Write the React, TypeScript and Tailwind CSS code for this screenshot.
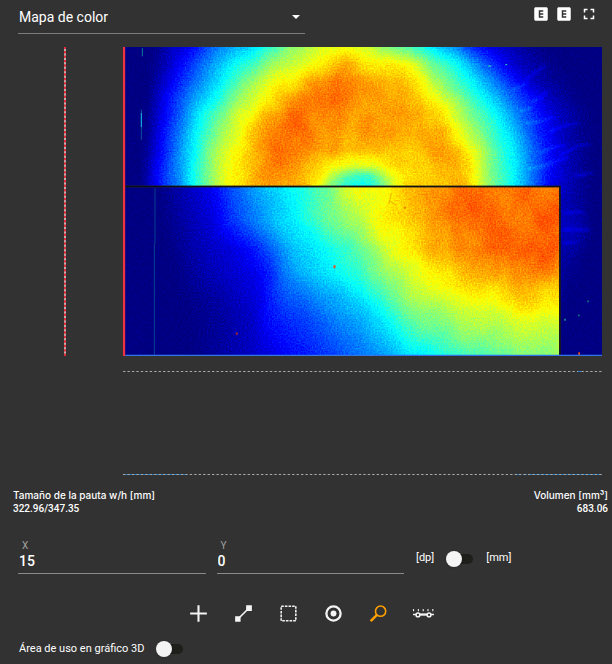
import { useState } from "react";
import { MdExplicit, MdFullscreen } from "react-icons/md";

type Stop = [number, number];
type Row = { y: number; stops: Stop[] };

// depth samples (x, level) per scan line, level 0..1
const UPPER: Row[] = [
  { y: 22, stops: [[95, 0], [160, 0.07], [220, 0.13], [290, 0.25], [350, 0.31], [430, 0.39], [500, 0.49], [560, 0.56], [650, 0.63], [760, 0.57], [840, 0.49], [930, 0.38], [1000, 0.28], [1060, 0.16], [1140, 0.08], [1220, 0.03], [1290, 0]] },
  { y: 70, stops: [[90, 0], [140, 0.06], [200, 0.15], [270, 0.27], [330, 0.35], [400, 0.45], [460, 0.53], [530, 0.59], [600, 0.64], [675, 0.72], [720, 0.65], [800, 0.65], [860, 0.61], [930, 0.5], [1000, 0.39], [1070, 0.26], [1130, 0.15], [1190, 0.07], [1260, 0.03], [1330, 0]] },
  { y: 120, stops: [[85, 0], [130, 0.07], [170, 0.14], [250, 0.27], [310, 0.38], [370, 0.48], [430, 0.57], [500, 0.63], [560, 0.7], [660, 0.76], [710, 0.71], [820, 0.71], [860, 0.67], [920, 0.6], [970, 0.51], [1040, 0.4], [1110, 0.27], [1170, 0.16], [1230, 0.07], [1290, 0.03], [1370, 0]] },
  { y: 170, stops: [[80, 0], [115, 0.07], [150, 0.14], [220, 0.27], [280, 0.38], [340, 0.5], [440, 0.63], [500, 0.7], [570, 0.74], [660, 0.76], [720, 0.72], [780, 0.74], [880, 0.69], [940, 0.62], [1010, 0.52], [1080, 0.39], [1150, 0.27], [1220, 0.16], [1280, 0.07], [1350, 0.02], [1400, 0]] },
  { y: 220, stops: [[78, 0], [110, 0.07], [145, 0.14], [200, 0.26], [250, 0.39], [310, 0.51], [400, 0.63], [440, 0.7], [510, 0.76], [570, 0.74], [650, 0.75], [720, 0.72], [830, 0.73], [910, 0.7], [980, 0.62], [1050, 0.51], [1110, 0.4], [1180, 0.28], [1240, 0.17], [1300, 0.08], [1370, 0.03], [1420, 0]] },
  { y: 270, stops: [[75, 0], [105, 0.07], [135, 0.14], [190, 0.27], [240, 0.39], [290, 0.5], [360, 0.62], [430, 0.7], [500, 0.76], [600, 0.74], [700, 0.71], [800, 0.72], [960, 0.7], [1020, 0.63], [1080, 0.52], [1130, 0.41], [1200, 0.28], [1260, 0.15], [1320, 0.07], [1380, 0.02], [1430, 0]] },
  { y: 330, stops: [[70, 0], [100, 0.07], [130, 0.14], [180, 0.27], [225, 0.39], [280, 0.51], [335, 0.62], [400, 0.7], [490, 0.77], [570, 0.73], [640, 0.71], [720, 0.69], [860, 0.68], [980, 0.72], [1030, 0.67], [1060, 0.62], [1110, 0.5], [1180, 0.36], [1230, 0.25], [1280, 0.14], [1340, 0.06], [1420, 0]] },
  { y: 375, stops: [[70, 0], [95, 0.08], [130, 0.16], [180, 0.28], [225, 0.39], [275, 0.51], [335, 0.62], [400, 0.7], [480, 0.75], [560, 0.71], [630, 0.66], [670, 0.62], [710, 0.59], [760, 0.61], [810, 0.66], [880, 0.68], [980, 0.71], [1040, 0.67], [1070, 0.61], [1110, 0.5], [1180, 0.37], [1230, 0.25], [1290, 0.13], [1340, 0.06], [1420, 0]] },
  { y: 408, stops: [[68, 0], [95, 0.09], [130, 0.17], [180, 0.27], [225, 0.39], [275, 0.51], [340, 0.63], [400, 0.7], [480, 0.74], [560, 0.7], [610, 0.64], [650, 0.54], [685, 0.44], [720, 0.41], [755, 0.44], [790, 0.56], [830, 0.63], [890, 0.67], [980, 0.71], [1040, 0.68], [1070, 0.62], [1110, 0.51], [1180, 0.37], [1240, 0.23], [1290, 0.12], [1350, 0.06], [1420, 0]] },
  { y: 440, stops: [[68, 0], [95, 0.09], [130, 0.17], [180, 0.26], [225, 0.39], [275, 0.51], [340, 0.64], [400, 0.7], [480, 0.71], [560, 0.69], [605, 0.6], [650, 0.46], [690, 0.38], [740, 0.37], [780, 0.46], [820, 0.59], [870, 0.67], [980, 0.7], [1040, 0.68], [1070, 0.62], [1110, 0.51], [1180, 0.37], [1240, 0.23], [1300, 0.1], [1350, 0.05], [1420, 0]] },
  { y: 500, stops: [[1300, 0], [1330, 0.06], [1380, 0.03], [1420, 0]] },
  { y: 560, stops: [[1300, 0], [1330, 0.07], [1380, 0.05], [1420, 0]] },
  { y: 650, stops: [[1300, 0], [1330, 0.04], [1370, 0.02], [1400, 0]] },
  { y: 760, stops: [[1300, 0], [1330, 0.02], [1350, 0]] },
  { y: 820, stops: [[1300, 0], [1330, 0]] },
  { y: 948, stops: [[1300, 0], [1330, 0]] },
];

const LOWER: Row[] = [
  { y: 442, stops: [[110, 0], [200, 0.06], [280, 0.12], [340, 0.21], [400, 0.28], [450, 0.33], [560, 0.41], [620, 0.49], [660, 0.56], [740, 0.62], [830, 0.66], [880, 0.69], [960, 0.74], [1020, 0.765], [1318, 0.76]] },
  { y: 540, stops: [[120, 0], [210, 0.05], [280, 0.09], [340, 0.18], [400, 0.25], [450, 0.3], [520, 0.37], [600, 0.44], [650, 0.49], [700, 0.55], [780, 0.62], [840, 0.65], [900, 0.69], [960, 0.74], [1060, 0.77], [1180, 0.765], [1300, 0.78]] },
  { y: 625, stops: [[140, 0], [230, 0.05], [330, 0.09], [400, 0.14], [460, 0.23], [510, 0.3], [600, 0.37], [680, 0.44], [750, 0.52], [800, 0.58], [850, 0.62], [900, 0.67], [950, 0.72], [1050, 0.76], [1180, 0.765], [1240, 0.8], [1318, 0.765]] },
  { y: 700, stops: [[160, 0], [260, 0.05], [400, 0.1], [450, 0.16], [490, 0.24], [560, 0.31], [660, 0.38], [740, 0.44], [790, 0.51], [850, 0.58], [920, 0.62], [980, 0.64], [1060, 0.69], [1180, 0.74], [1240, 0.75], [1318, 0.72]] },
  { y: 770, stops: [[170, 0], [300, 0.04], [420, 0.1], [450, 0.15], [500, 0.21], [600, 0.27], [700, 0.33], [770, 0.41], [820, 0.48], [900, 0.56], [970, 0.59], [1050, 0.62], [1160, 0.66], [1240, 0.68], [1318, 0.66]] },
  { y: 840, stops: [[190, 0], [300, 0.03], [400, 0.07], [440, 0.13], [520, 0.17], [600, 0.21], [700, 0.28], [790, 0.36], [850, 0.43], [910, 0.49], [1000, 0.54], [1100, 0.58], [1240, 0.59], [1318, 0.6]] },
  { y: 948, stops: [[210, 0], [350, 0.05], [440, 0.09], [480, 0.12], [560, 0.15], [640, 0.19], [720, 0.24], [800, 0.28], [860, 0.34], [950, 0.4], [1040, 0.43], [1140, 0.47], [1220, 0.5], [1318, 0.52]] },
];

const STRIP = 6;

function levelAt(stops: Stop[], x: number) {
  if (x <= stops[0][0]) return stops[0][1];
  for (let i = 1; i < stops.length; i++) {
    const [x0, v0] = stops[i - 1];
    const [x1, v1] = stops[i];
    if (x <= x1) return v0 + ((v1 - v0) * (x - x0)) / (x1 - x0);
  }
  return stops[stops.length - 1][1];
}

function buildStrips(rows: Row[], left: number, right: number) {
  const strips: { y: number; colors: string[] }[] = [];
  const last = rows[rows.length - 1].y;
  for (let y = rows[0].y; y < last; y += STRIP) {
    let i = 0;
    while (i < rows.length - 2 && rows[i + 1].y <= y) i++;
    const t = (y - rows[i].y) / (rows[i + 1].y - rows[i].y);
    const colors: string[] = [];
    for (let n = 0; n <= 60; n++) {
      const x = left + ((right - left) * n) / 60;
      const v = levelAt(rows[i].stops, x) * (1 - t) + levelAt(rows[i + 1].stops, x) * t;
      const g = Math.round(v * 255);
      colors.push(`rgb(${g},${g},${g})`);
    }
    strips.push({ y, colors });
  }
  return strips;
}

const upperStrips = buildStrips(UPPER, 10, 1446);
const lowerStrips = buildStrips(LOWER, 10, 1318);

function Strips({ id, strips, width }: { id: string; strips: typeof upperStrips; width: number }) {
  return (
    <g shapeRendering="crispEdges">
      {strips.map((s, i) => (
        <g key={s.y}>
          <linearGradient id={`${id}${i}`}>
            {s.colors.map((c, n) => (
              <stop key={n} offset={n / 60} stopColor={c} />
            ))}
          </linearGradient>
          <rect x={10} y={s.y} width={width} height={STRIP + 2} fill={`url(#${id}${i})`} />
        </g>
      ))}
    </g>
  );
}

function HeatMap() {
  return (
    <svg viewBox="10 22 1436 926" preserveAspectRatio="none" className="block aspect-[479/309] w-full" role="img" aria-label="Mapa de color">
      <defs>
        <filter id="jet" x="0" y="0" width="100%" height="100%" colorInterpolationFilters="sRGB">
          <feTurbulence type="fractalNoise" baseFrequency="0.21" numOctaves={1} seed={4} result="n" />
          <feColorMatrix in="n" values="1 0 0 0 0  1 0 0 0 0  1 0 0 0 0  0 0 0 0 1" result="grain" />
          <feTurbulence type="fractalNoise" baseFrequency="0.012 0.009" numOctaves={4} seed={9} result="m" />
          <feColorMatrix in="m" values="1 0 0 0 0  1 0 0 0 0  1 0 0 0 0  0 0 0 0 1" result="mottle" />
          <feComposite in="SourceGraphic" in2="grain" operator="arithmetic" k1={0} k2={1} k3={0.13} k4={-0.067} result="a" />
          <feComposite in="a" in2="mottle" operator="arithmetic" k1={0.12} k2={0.94} k3={0} k4={0} />
          <feComponentTransfer>
            <feFuncR type="table" tableValues="0 0 0 0 .5 1 1 1 .5" />
            <feFuncG type="table" tableValues="0 0 .5 1 1 1 .5 0 0" />
            <feFuncB type="table" tableValues=".5 1 1 1 .5 0 0 0 0" />
          </feComponentTransfer>
        </filter>
        <filter id="soft">
          <feGaussianBlur stdDeviation="4" />
        </filter>
        <clipPath id="upper">
          <path d="M10 22H1446V948H1322V438H10Z" />
        </clipPath>
        <clipPath id="lower">
          <path d="M10 442H1318V948H10Z" />
        </clipPath>
      </defs>

      <g clipPath="url(#upper)">
        <g filter="url(#jet)">
          <Strips id="u" strips={upperStrips} width={1436} />
          <g fill="none" stroke="#fff" strokeWidth={6} strokeLinecap="round" opacity={0.08} filter="url(#soft)">
            <path d="M1215 125q30-30 60-45M1238 186q25-8 40-28M1220 250q40-2 80-18M1290 276q40-22 80-24M1260 340q40-24 75-22M1225 385q50-2 80-20l40-12M1365 320l45-6M1320 345l40-18M1370 408l50-10M1180 150l40-18M1200 215l35-12" />
            <path d="M1330 570h80M1330 520l60-4M1330 610l40-3" />
          </g>
        </g>
      </g>
      <g clipPath="url(#lower)">
        <g filter="url(#jet)">
          <Strips id="l" strips={lowerStrips} width={1308} />
        </g>
      </g>

      {/* scratches and specks */}
      <path d="M68 26v24" stroke="#087f96" strokeWidth={3} />
      <path d="M65 210v90" stroke="#0a50a0" strokeWidth={3} />
      <path d="M65 220v42" stroke="#10b8e0" strokeWidth={3} />
      <path d="M106 446v165M104 611v334" stroke="#0a3f92" strokeWidth={3} />
      <path d="M815 460l-8 34M812 485l16 10" stroke="#e8b400" strokeWidth={3} fill="none" />
      <path d="M641 676h6v9h-6zM1375 937h5v8h-5z" fill="#e8501c" />
      <path d="M852 501h6v6h-6zM1124 649h5v5h-5z" fill="#e87800" />
      <path d="M348 877h6v8h-6z" fill="#902040" />
      <path d="M1332 836h6v6h-6zM1402 782h5v5h-5zM1374 824h5v5h-5z" fill="#107090" />
      <path d="M1104 77h10v4h-10zM1156 73h6v4h-6z" fill="#20b0c0" />

      <path d="M16 440H1320V945" fill="none" stroke="#101010" strokeWidth={4} />
      <path d="M10 946H1446" stroke="#3275e8" strokeWidth={4} />
      <path d="M13 22V948" stroke="#f03340" strokeWidth={7} />
    </svg>
  );
}

function DashedLine({ blue }: { blue?: boolean }) {
  return (
    <svg viewBox="0 0 479 1" preserveAspectRatio="none" className="block h-px w-full" aria-hidden="true">
      {blue && <path d="M0 .5H64M394 .5h3M400 .5h4M407 .5h72" stroke="#1f78c0" />}
      <path d="M0 .5H479" stroke="#a8a8a8" strokeDasharray="2.4 2.05" />
      {!blue && <path d="M455 .5h3" stroke="#2080d0" />}
    </svg>
  );
}

function Toggle({ id, label }: { id: string; label: string }) {
  return (
    <input
      id={id}
      type="checkbox"
      role="switch"
      aria-label={label}
      className="relative h-2.5 w-[26px] shrink-0 cursor-pointer appearance-none rounded-full bg-[#1e1f1b] before:absolute before:-top-[3px] before:-left-px before:size-4 before:rounded-full before:bg-[#f4f4f4] before:shadow checked:before:left-3"
    />
  );
}

const TOOLS = [
  { name: "Punto", icon: <path d="M11 3v16M3 11h16" stroke="currentColor" strokeWidth={2} /> },
  {
    name: "Línea",
    icon: (
      <>
        <path d="M5.5 16.5L16.5 5.5" stroke="currentColor" strokeWidth={1.6} />
        <path d="M3 13.7h5.2V19H3zM13.5 3h5.5v5.5h-5.5z" fill="currentColor" />
      </>
    ),
  },
  {
    name: "Área",
    icon: <rect x={4} y={4} width={14} height={14} fill="none" stroke="currentColor" strokeWidth={1.5} strokeDasharray="2.5 1" />,
  },
  {
    name: "Centro",
    icon: (
      <>
        <circle cx={11} cy={11} r={6.8} fill="none" stroke="currentColor" strokeWidth={2.2} />
        <circle cx={11} cy={11} r={2.8} fill="currentColor" />
      </>
    ),
  },
  {
    name: "Lupa",
    icon: (
      <>
        <circle cx={13} cy={8.8} r={4.9} fill="none" stroke="currentColor" strokeWidth={1.5} />
        <path d="M9.5 12.3L3.5 18.3" stroke="currentColor" strokeWidth={2.4} />
      </>
    ),
  },
  {
    name: "Perfil",
    icon: (
      <>
        <path d="M1 7.8h20" stroke="currentColor" strokeWidth={2} strokeDasharray="1 3.6" />
        <path d="M1 12h3M18 12h3" stroke="currentColor" strokeWidth={1.4} />
        <path d="M7 12h8" stroke="currentColor" strokeWidth={2.2} />
        <circle cx={5.7} cy={12.4} r={1.8} fill="none" stroke="currentColor" strokeWidth={1.4} />
        <circle cx={16.3} cy={12.4} r={1.8} fill="none" stroke="currentColor" strokeWidth={1.4} />
      </>
    ),
  },
];

export default function App() {
  const [x, setX] = useState("15");
  const [y, setY] = useState("0");
  const [tool, setTool] = useState("Lupa");

  return (
    <main className="min-h-screen bg-[#323232] font-[Roboto,sans-serif] text-[11px] text-white">
      <header className="flex items-start justify-between pr-3.5 pl-[18px]">
        <div className="grid h-[34px] w-[287px] items-center border-b border-[#7c7c7c]">
          <select aria-label="Mapa" className="col-start-1 row-start-1 h-8 w-full appearance-none bg-transparent pl-px text-sm outline-none">
            <option>Mapa de color</option>
          </select>
          <svg viewBox="0 0 8 4" className="pointer-events-none col-start-1 row-start-1 mr-[5px] h-1 w-2 justify-self-end" aria-hidden="true">
            <path d="M0 0h8L4 4z" fill="currentColor" />
          </svg>
        </div>
        <div className="flex items-center gap-[5px] pt-[5px]">
          <button aria-label="Exportar"><MdExplicit size={18} /></button>
          <button aria-label="Exportar todo"><MdExplicit size={18} /></button>
          <button aria-label="Pantalla completa" className="ml-0.5"><MdFullscreen size={18} /></button>
        </div>
      </header>

      <section className="grid grid-cols-[66px_minmax(0,1fr)] pt-[13px] pr-2.5">
        <svg viewBox="0 0 2 309" preserveAspectRatio="none" className="h-full w-0.5 justify-self-end" aria-hidden="true">
          <path d="M1 0V309" stroke="#e02c38" strokeWidth={2} />
          <path d="M1 2V309" stroke="#bdb0b0" strokeWidth={2} strokeDasharray="2 2.45" />
        </svg>
        <div className="pl-[57px]">
          <HeatMap />
        </div>
        <div className="col-start-2 flex flex-col gap-[102px] pt-[15px] pl-[57px]">
          <DashedLine />
          <DashedLine blue />
        </div>
      </section>

      <section className="flex justify-between pt-[13px] pr-1 pl-[13px] text-[10px] leading-[14px]">
        <div>
          <h2 className="font-[Inter,sans-serif] font-medium">Tamaño de la pauta w/h [mm]</h2>
          <p className="font-medium">322.96/347.35</p>
        </div>
        <div className="text-right">
          <h2 className="font-[Inter,sans-serif] font-medium">Volumen [mm³]</h2>
          <p className="font-medium">683.06</p>
        </div>
      </section>

      <section className="flex pt-6 pl-[18px]">
        <div className="grid flex-1 grid-cols-2 gap-[11px]">
          <div className="flex flex-col border-b border-[#8a8a8a] pb-[3px]">
            <label htmlFor="x" className="pl-1 text-[10px] leading-3 text-[#a0a0a0]">X</label>
            <input id="x" value={x} onChange={(e) => setX(e.target.value)} className="w-full bg-transparent pl-px text-sm leading-[18px] font-medium outline-none" />
          </div>
          <div className="flex flex-col border-b border-[#8a8a8a] pb-[3px]">
            <label htmlFor="y" className="pl-1 text-[10px] leading-3 text-[#a0a0a0]">Y</label>
            <input id="y" value={y} onChange={(e) => setY(e.target.value)} className="w-full bg-transparent pl-px text-sm leading-[18px] font-medium outline-none" />
          </div>
        </div>
        <div className="flex w-52 items-center gap-[13px] pt-[3px] pl-3">
          <label htmlFor="unit">[dp]</label>
          <Toggle id="unit" label="Unidad: dp o mm" />
          <label htmlFor="unit">[mm]</label>
        </div>
      </section>

      <div role="toolbar" className="flex justify-center gap-[22px] pt-7 pl-2.5">
        {TOOLS.map((t) => (
          <button
            key={t.name}
            aria-label={t.name}
            aria-pressed={tool === t.name}
            onClick={() => setTool(t.name)}
            className={tool === t.name ? "text-[#ffa000]" : "text-[#f4f4f4]"}
          >
            <svg viewBox="0 0 22 22" className="size-[23px]" fill="none">{t.icon}</svg>
          </button>
        ))}
      </div>

      <div className="flex items-center gap-[13px] pt-4 pl-[19px]">
        <label htmlFor="area">Área de uso en gráfico 3D</label>
        <Toggle id="area" label="Área de uso en gráfico 3D" />
      </div>
    </main>
  );
}
